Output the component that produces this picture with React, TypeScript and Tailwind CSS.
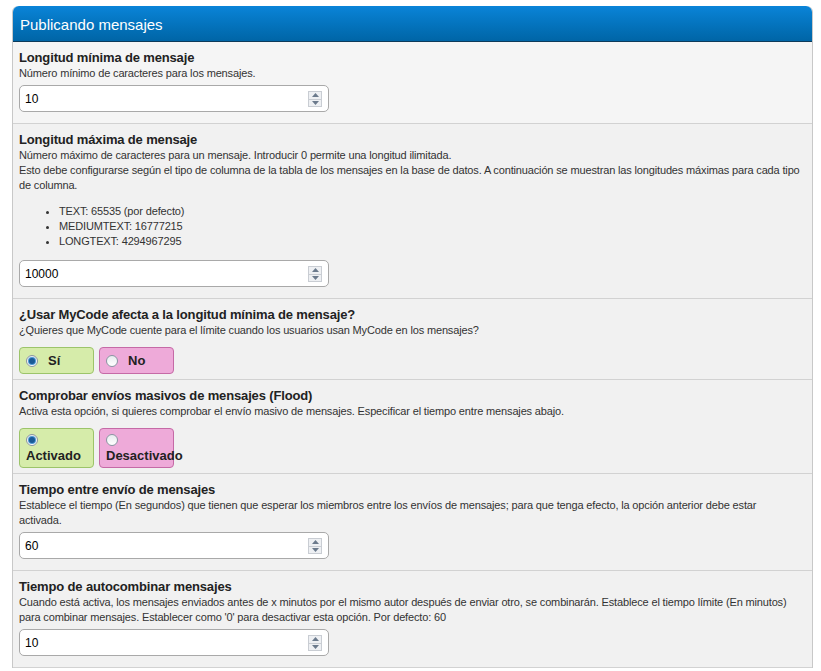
import React from 'react';

type Setting =
  | { kind: 'number'; title: string; desc: React.ReactNode; value: string }
  | { kind: 'yesno'; title: string; desc: React.ReactNode; yes: string; no: string; stacked?: boolean };

const Spinner = () => (
  <div className="absolute right-[6px] top-[5px] flex h-[16px] w-[14px] flex-col border border-[#c9cdd3] bg-[#eef0f3]">
    <div className="flex flex-1 items-center justify-center border-b border-[#c9cdd3]">
      <svg width="7" height="4" viewBox="0 0 7 4">
        <path d="M3.5 0 L7 4 L0 4 Z" fill="#6b7a8c" />
      </svg>
    </div>
    <div className="flex flex-1 items-center justify-center">
      <svg width="7" height="4" viewBox="0 0 7 4">
        <path d="M0 0 L7 0 L3.5 4 Z" fill="#6b7a8c" />
      </svg>
    </div>
  </div>
);

const NumberBox = ({ value }: { value: string }) => (
  <div className="relative mt-[4px] h-[27px] w-[310px] rounded-[5px] border border-[#a9a9a9] bg-white">
    <span className="absolute left-[5px] top-[5px] text-[12px] leading-[16px] text-black">{value}</span>
    <Spinner />
  </div>
);

const Radio = ({ checked }: { checked: boolean }) => (
  <span className="inline-flex h-[12px] w-[12px] shrink-0 items-center justify-center rounded-full border border-[#8a96a3] bg-gradient-to-b from-[#e9ecef] to-white">
    {checked && <span className="h-[6px] w-[6px] rounded-full bg-[#1a5a96] shadow-[0_0_0_1px_#4d9ad6]" />}
  </span>
);

const Choice = ({ label, checked, tone, stacked }: { label: string; checked: boolean; tone: 'yes' | 'no'; stacked?: boolean }) => (
  <div
    className={`w-[75px] rounded-[4px] border px-[6px] ${
      tone === 'yes' ? 'border-[#9cc46a] bg-[#d6ecaa]' : 'border-[#c56aa6] bg-[#eeaad9]'
    } ${stacked ? 'flex h-[40px] flex-col pt-[5px]' : 'flex h-[27px] items-center gap-[10px]'}`}
  >
    <Radio checked={checked} />
    <span className={`whitespace-nowrap text-[13px] font-bold text-[#222] ${stacked ? 'mt-[2px] leading-[16px]' : ''}`}>{label}</span>
  </div>
);

const settings: Setting[] = [
  {
    kind: 'number',
    title: 'Longitud mínima de mensaje',
    desc: 'Número mínimo de caracteres para los mensajes.',
    value: '10',
  },
  {
    kind: 'number',
    title: 'Longitud máxima de mensaje',
    desc: (
      <>
        Número máximo de caracteres para un mensaje. Introducir 0 permite una longitud ilimitada.
        <br />
        Esto debe configurarse según el tipo de columna de la tabla de los mensajes en la base de datos. A continuación se
        muestran las longitudes máximas para cada tipo de columna.
        <ul className="my-[11px] ml-[40px] list-disc">
          <li>TEXT: 65535 (por defecto)</li>
          <li>MEDIUMTEXT: 16777215</li>
          <li>LONGTEXT: 4294967295</li>
        </ul>
      </>
    ),
    value: '10000',
  },
  {
    kind: 'yesno',
    title: '¿Usar MyCode afecta a la longitud mínima de mensaje?',
    desc: '¿Quieres que MyCode cuente para el límite cuando los usuarios usan MyCode en los mensajes?',
    yes: 'Sí',
    no: 'No',
  },
  {
    kind: 'yesno',
    title: 'Comprobar envíos masivos de mensajes (Flood)',
    desc: 'Activa esta opción, si quieres comprobar el envío masivo de mensajes. Especificar el tiempo entre mensajes abajo.',
    yes: 'Activado',
    no: 'Desactivado',
    stacked: true,
  },
  {
    kind: 'number',
    title: 'Tiempo entre envío de mensajes',
    desc: (
      <>
        Establece el tiempo (En segundos) que tienen que esperar los miembros entre los envíos de mensajes; para que tenga
        efecto, la opción anterior debe estar
        <br />
        activada.
      </>
    ),
    value: '60',
  },
  {
    kind: 'number',
    title: 'Tiempo de autocombinar mensajes',
    desc: "Cuando está activa, los mensajes enviados antes de x minutos por el mismo autor después de enviar otro, se combinarán. Establece el tiempo límite (En minutos) para combinar mensajes. Establecer como '0' para desactivar esta opción. Por defecto: 60",
    value: '10',
  },
];

export default function App() {
  return (
    <div className="min-h-[671px] bg-white pl-[12px] pr-[8px] pt-[6px] font-['Liberation_Sans',Arial,sans-serif]">
      <div className="w-[801px] rounded-t-[6px] border-x border-[#c8c8c8]">
        {/* Header */}
        <div className="h-[36px] rounded-t-[6px] border-b border-[#0d3a5a] bg-gradient-to-b from-[#0a84d8] to-[#0065a6] px-[7px] pt-[10px] text-[15px] leading-[18px] text-white">
          Publicando mensajes
        </div>

        {settings.map((s, i) => (
          <div
            key={i}
            className={`border-b border-[#d2d2d2] px-[6px] pt-[8px] ${s.kind === 'number' ? 'pb-[11px]' : 'pb-[5px]'} ${
              i === 0 ? 'bg-[#f5f5f5]' : 'bg-[#f1f1f1]'
            }`}
          >
            <div className="text-[13px] font-bold leading-[16px] tracking-[-0.15px] text-[#222]">{s.title}</div>
            <div className="text-[11px] leading-[15px] tracking-[-0.15px] text-[#333]">{s.desc}</div>
            {s.kind === 'number' ? (
              <NumberBox value={s.value} />
            ) : (
              <div className="mt-[9px] flex gap-[5px]">
                <Choice label={s.yes} checked tone="yes" stacked={s.stacked} />
                <Choice label={s.no} checked={false} tone="no" stacked={s.stacked} />
              </div>
            )}
          </div>
        ))}
      </div>
    </div>
  );
}
